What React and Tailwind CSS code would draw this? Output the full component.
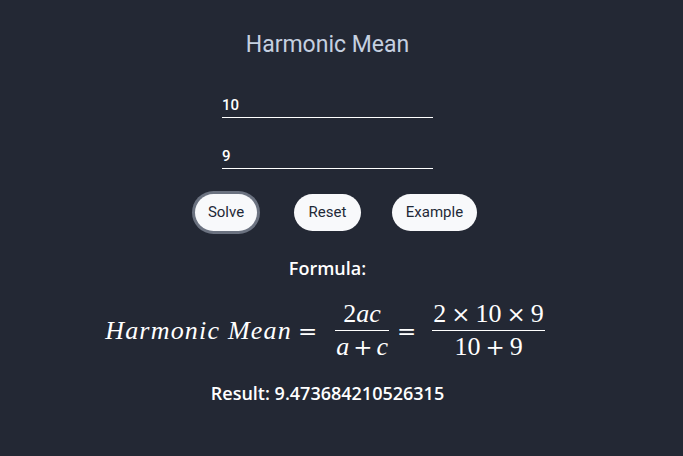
import React from "react";

function Op({ children }) {
  return <span className="text-[23px]" style={{ fontFamily: "'DejaVu Serif', serif" }}>{children}</span>;
}

function Frac({ num, den }) {
  return (
    <div className="flex flex-col items-center ml-[12px] mr-[2px]">
      <div className="px-[1px] pb-[2px] leading-[28px]">{num}</div>
      <div className="h-[1px] bg-white self-stretch" />
      <div className="px-[1px] pt-[2px] leading-[28px]">{den}</div>
    </div>
  );
}

export default function App() {
  return (
    <div className="min-h-[456px] w-full bg-[#232834]" style={{ fontFamily: "Roboto, 'Open Sans', sans-serif" }}>
      <div className="flex flex-col items-center pr-[28px]">
        <h1 className="mt-[31px] text-[23px] leading-[28px] text-[#c5d0e0] font-normal">Harmonic Mean</h1>
        <div className="mt-[31px] w-[211px] h-[28px] pt-[3px] border-b border-white flex items-center text-white text-[15px] font-medium">10</div>
        <div className="mt-[23px] w-[211px] h-[28px] pt-[3px] border-b border-white flex items-center text-white text-[15px] font-medium">9</div>
        <div className="mt-[25px] flex items-center pl-[17px]">
          <button className="h-[37px] w-[62px] rounded-full bg-[#f8f9fb] text-[#1f2937] text-[15px] ring-[3px] ring-[#6b7280]">Solve</button>
          <button className="ml-[37px] h-[37px] w-[67px] rounded-full bg-[#f8f9fb] text-[#1f2937] text-[15px]">Reset</button>
          <button className="ml-[31px] h-[37px] w-[85px] rounded-full bg-[#f8f9fb] text-[#1f2937] text-[15px]">Example</button>
        </div>
        <div className="mt-[25px] text-[18px] leading-[24px] font-semibold text-white" style={{ fontFamily: "'Open Sans', sans-serif" }}>Formula:</div>
        <div className="mt-[20px] flex items-center text-white text-[26px] pr-[3px]" style={{ fontFamily: "'Liberation Serif', serif" }}>
          <span className="italic tracking-[1.2px]">Harmonic Mean</span>
          <span className="ml-[6px] mr-[6px]"><Op>=</Op></span>
          <Frac num={<span><span>2</span><span className="italic">ac</span></span>} den={<span><span className="italic">a</span><span className="mx-[4px]"><Op>+</Op></span><span className="italic">c</span></span>} />
          <span className="ml-[6px] mr-[4px]"><Op>=</Op></span>
          <Frac num={<span>2<span className="mx-[5px]"><Op>×</Op></span>10<span className="mx-[5px]"><Op>×</Op></span>9</span>} den={<span>10<span className="mx-[5px]"><Op>+</Op></span>9</span>} />
        </div>
        <div className="mt-[20px] text-[18px] leading-[24px] font-semibold text-white" style={{ fontFamily: "'Open Sans', sans-serif" }}>Result: 9.473684210526315</div>
      </div>
    </div>
  );
}
